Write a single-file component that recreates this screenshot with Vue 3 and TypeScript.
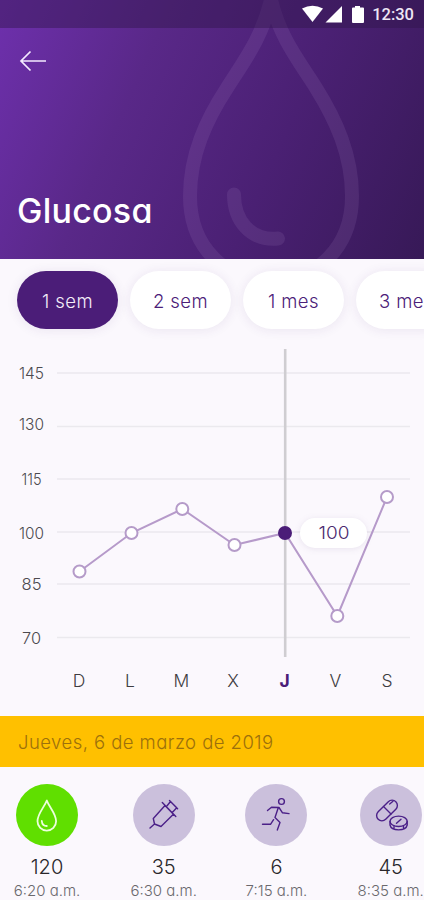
<script setup lang="ts">
interface Reading {
  icon: 'drop' | 'syringe' | 'runner' | 'pills'
  value: string
  time: string
  active?: boolean
}
interface Tick { label: string; y: number; line: number; width: number }
interface Day { label: string; x: number; px: number; py: number; active?: boolean }

const ranges: string[] = ['1 sem', '2 sem', '1 mes', '3 mes']

const ticks: Tick[] = [
  { label: '145', y: 39, line: 33, width: 25 },
  { label: '130', y: 90, line: 86.5, width: 25 },
  { label: '115', y: 144.5, line: 139, width: 20 },
  { label: '100', y: 198.5, line: 192, width: 25 },
  { label: '85', y: 250, line: 244, width: 20 },
  { label: '70', y: 303.5, line: 297.5, width: 19 },
]

const days: Day[] = [
  { label: 'D', x: 79, px: 79.5, py: 231.5 },
  { label: 'L', x: 130, px: 131.5, py: 193 },
  { label: 'M', x: 181.5, px: 182.3, py: 169 },
  { label: 'X', x: 233, px: 234.5, py: 205 },
  { label: 'J', x: 284.5, px: 285, py: 193, active: true },
  { label: 'V', x: 335.5, px: 337.3, py: 276 },
  { label: 'S', x: 387, px: 387, py: 157 },
]
const line = days.map((d) => `${d.px},${d.py}`).join(' ')

const readings: Reading[] = [
  { icon: 'drop', value: '120', time: '6:20 a.m.', active: true },
  { icon: 'syringe', value: '35', time: '6:30 a.m.' },
  { icon: 'runner', value: '6', time: '7:15 a.m.' },
  { icon: 'pills', value: '45', time: '8:35 a.m.' },
]
</script>

<template>
  <div class="screen">
    <header class="hero">
      <svg class="hero-drop" width="424" height="259" viewBox="0 0 424 259" fill="none">
        <path d="M271 0C262 38 244 61 227 88C206 120 190 155 190 196C190 248 226 281 271 281C316 281 352 248 352 196C352 155 336 120 316 88C299 61 280 38 271 0Z" />
        <path d="M234 194.500C234 220 250 241 278 238.500" stroke-linecap="round" />
      </svg>
      <div class="status">
        <svg width="62" height="18" viewBox="0 0 62 18" fill="#fff">
          <path d="M0 3.500Q10.500 -2 21 3.500L10.500 17Z" />
          <path d="M23.500 17.500L40 1V17.500Z" />
          <path d="M50 2.500H53V1H58V2.500H61Q62 2.500 62 3.500V17Q62 18 61 18H51Q50 18 50 17V3.500Q50 2.500 51 2.500Z" />
        </svg>
        <span class="clock">12:30</span>
      </div>
      <svg class="back" width="28" height="22" viewBox="0 0 28 22" fill="none" stroke="#f4eaff" stroke-width="1.700">
        <path d="M27 11H2M11.500 1.500L2 11L11.500 20.500" />
      </svg>
      <h1>Glucosa</h1>
    </header>

    <nav class="ranges">
      <button v-for="(r, i) in ranges" :key="r" class="pill" :class="{ on: i === 0 }">{{ r }}</button>
    </nav>

    <svg class="chart" width="424" height="376" viewBox="0 0 424 376">
      <g v-for="t in ticks" :key="t.label">
        <path class="grid" :d="`M57 ${t.line}H410`" />
        <text class="tick" x="31.500" :y="t.y" text-anchor="middle" :textLength="t.width" lengthAdjust="spacingAndGlyphs">{{ t.label }}</text>
      </g>
      <path class="cursor" d="M285.200 9V317" />
      <polyline class="series" :points="line" />
      <circle v-for="d in days" :key="d.label" class="dot" :class="{ on: d.active }" :cx="d.px" :cy="d.py" r="6" />
      <rect class="bubble" x="300" y="178" width="67" height="30" rx="15" />
      <text class="bubble-text" x="334" y="199.300" text-anchor="middle" textLength="31" lengthAdjust="spacingAndGlyphs">100</text>
      <text v-for="d in days" :key="d.label + 'x'" class="day" :class="{ on: d.active }" :x="d.x" y="347.300" text-anchor="middle">{{ d.label }}</text>
    </svg>

    <div class="date">Jueves, 6 de marzo de 2019</div>

    <section class="readings">
      <article v-for="r in readings" :key="r.icon" class="reading">
        <div class="disc" :class="{ on: r.active }">
          <svg v-if="r.icon === 'drop'" width="62" height="62" viewBox="0 0 62 62">
            <path d="M30.800 16.500C28.500 23 21.500 29.500 21.500 37.300A9.300 9.300 0 0 0 40.100 37.300C40.100 29.500 33 23 30.800 16.500Z" />
            <path d="M25.800 37C26 40 28 42 30.800 42" />
          </svg>
          <svg v-else-if="r.icon === 'syringe'" width="62" height="62" viewBox="0 0 62 62">
            <path d="M17 44L21.500 40M21.500 40L20.300 34.500L32 21.500L40.400 30.200L28 42.500L21.500 40M29.300 18.600L42.800 32.600M33.500 22.500L37.500 17.500L43.700 23.800L39.300 28.500M36.500 16.500L44.600 24.700" />
          </svg>
          <svg v-else-if="r.icon === 'runner'" width="62" height="62" viewBox="0 0 62 62">
            <circle cx="36.500" cy="17.500" r="2.900" />
            <path d="M22.500 26.500L26.500 23.200L34 23.500L37.500 28.800L44 29.600M33 24.500L30 33.500L35 38.500L32.300 46M28.600 35.700L25.500 40.300H17.500" />
          </svg>
          <svg v-else width="62" height="62" viewBox="0 0 62 62">
            <rect x="14.500" y="21.200" width="25" height="10.600" rx="5.300" transform="rotate(-45 27 26.500)" />
            <path d="M23.500 22.500L31 30M29.700 20L33 17.300" />
            <ellipse cx="38.600" cy="37.300" rx="8.600" ry="5.200" />
            <path d="M30 37.500V41C31.500 47.500 45.700 47.500 47.200 41V37.500M36.500 39.300L41 35.200M34 42.500V45M43.500 42.500V45" />
          </svg>
        </div>
        <strong>{{ r.value }}</strong>
        <small>{{ r.time }}</small>
      </article>
    </section>
  </div>
</template>

<style>
body { margin: 0; overflow: hidden; }
</style>

<style scoped>
.screen {
  width: 424px;
  height: 900px;
  overflow: hidden;
  background: #fbf8fd;
  font-family: Inter, "Open Sans", sans-serif;
  font-feature-settings: "cv11";
  display: flex;
  flex-direction: column;
}
.hero {
  position: relative;
  flex: none;
  height: 259px;
  background: linear-gradient(114deg, #6e30ad 0%, #592888 32%, #4a2073 64%, #371957 100%);
  color: #fff;
}
.hero-drop { position: absolute; inset: 0; stroke: rgba(190, 160, 215, 0.12); stroke-width: 14; }
.status {
  position: relative;
  box-sizing: border-box;
  height: 28px;
  padding: 0 10px 0 0;
  background: rgba(48, 22, 76, 0.45);
  display: flex;
  align-items: center;
  justify-content: flex-end;
  gap: 8px;
}
.clock { font: 500 16.500px/28px Roboto, sans-serif; color: #eee6f5; margin-top: 2px; }
.back { display: block; margin: 22px 0 0 19px; }
h1 {
  position: relative;
  margin: 119px 0 0 17px;
  font-size: 34px;
  line-height: 40px;
  font-weight: 500;
  letter-spacing: 0.25px;
}
.ranges { flex: none; display: flex; gap: 12px; padding: 12px 0 0 17px; height: 69px; }
.pill {
  flex: none;
  width: 101px;
  height: 58px;
  padding: 2px 0 0;
  border: 0;
  border-radius: 29px;
  background: #fff;
  color: #4b2078;
  font: 350 18.500px/56px Inter, "Open Sans", sans-serif;
  letter-spacing: 0.4px;
  font-feature-settings: "cv11";
  box-shadow: 0 1px 12px rgba(70, 35, 110, 0.09);
}
.pill.on { background: #4b1d78; color: #f4edf9; }
.chart { flex: none; display: block; height: 388px; margin-bottom: -12px; }
.chart { height: 376px; margin-bottom: 0; }
.grid { stroke: #ebe9ee; stroke-width: 1.6; }
.cursor { stroke: #cfcdd1; stroke-width: 2.6; }
.series { fill: none; stroke: #b69aca; stroke-width: 2; }
.dot { fill: #fff; stroke: #b59bc9; stroke-width: 2; }
.dot.on { fill: #4b1d78; stroke: #4b1d78; }
.bubble { fill: #fff; filter: drop-shadow(0 1px 3px rgba(70, 35, 110, 0.1)); }
.bubble-text { font-size: 17.500px; font-weight: 350; fill: #4b2a70; }
.tick { font-size: 16px; font-weight: 300; fill: #4c4a4f; }
.day { font-size: 17.5px; font-weight: 300; fill: #3e3c41; }
.day.on { font-weight: 700; fill: #4b1d78; }
.date {
  flex: none;
  height: 51px;
  padding-left: 18px;
  background: #ffc000;
  color: #9c700c;
  font-size: 18.500px;
  font-weight: 300;
  letter-spacing: 0.45px;
  line-height: 53px;
}
.readings {
  display: grid;
  grid-template-columns: 116.700px 112.800px 114.200px 80px;
  padding: 17px 0 0 7px;
}
.reading { width: 80px; display: flex; flex-direction: column; align-items: center; white-space: nowrap; }
.disc { width: 62px; height: 62px; border-radius: 50%; background: #cbc0dc; }
.disc svg { display: block; fill: none; stroke: #4b2088; stroke-width: 1.4; stroke-linejoin: round; stroke-linecap: round; }
.disc.on { background: #60df00; }
.disc.on svg { stroke: #ecffdc; stroke-width: 1.8; }
strong { margin-top: 8px; font-size: 20px; line-height: 26px; font-weight: 350; color: #29272b; }
small { margin-top: 2px; font-size: 15px; line-height: 17px; font-weight: 300; color: #6a686d; }
</style>
